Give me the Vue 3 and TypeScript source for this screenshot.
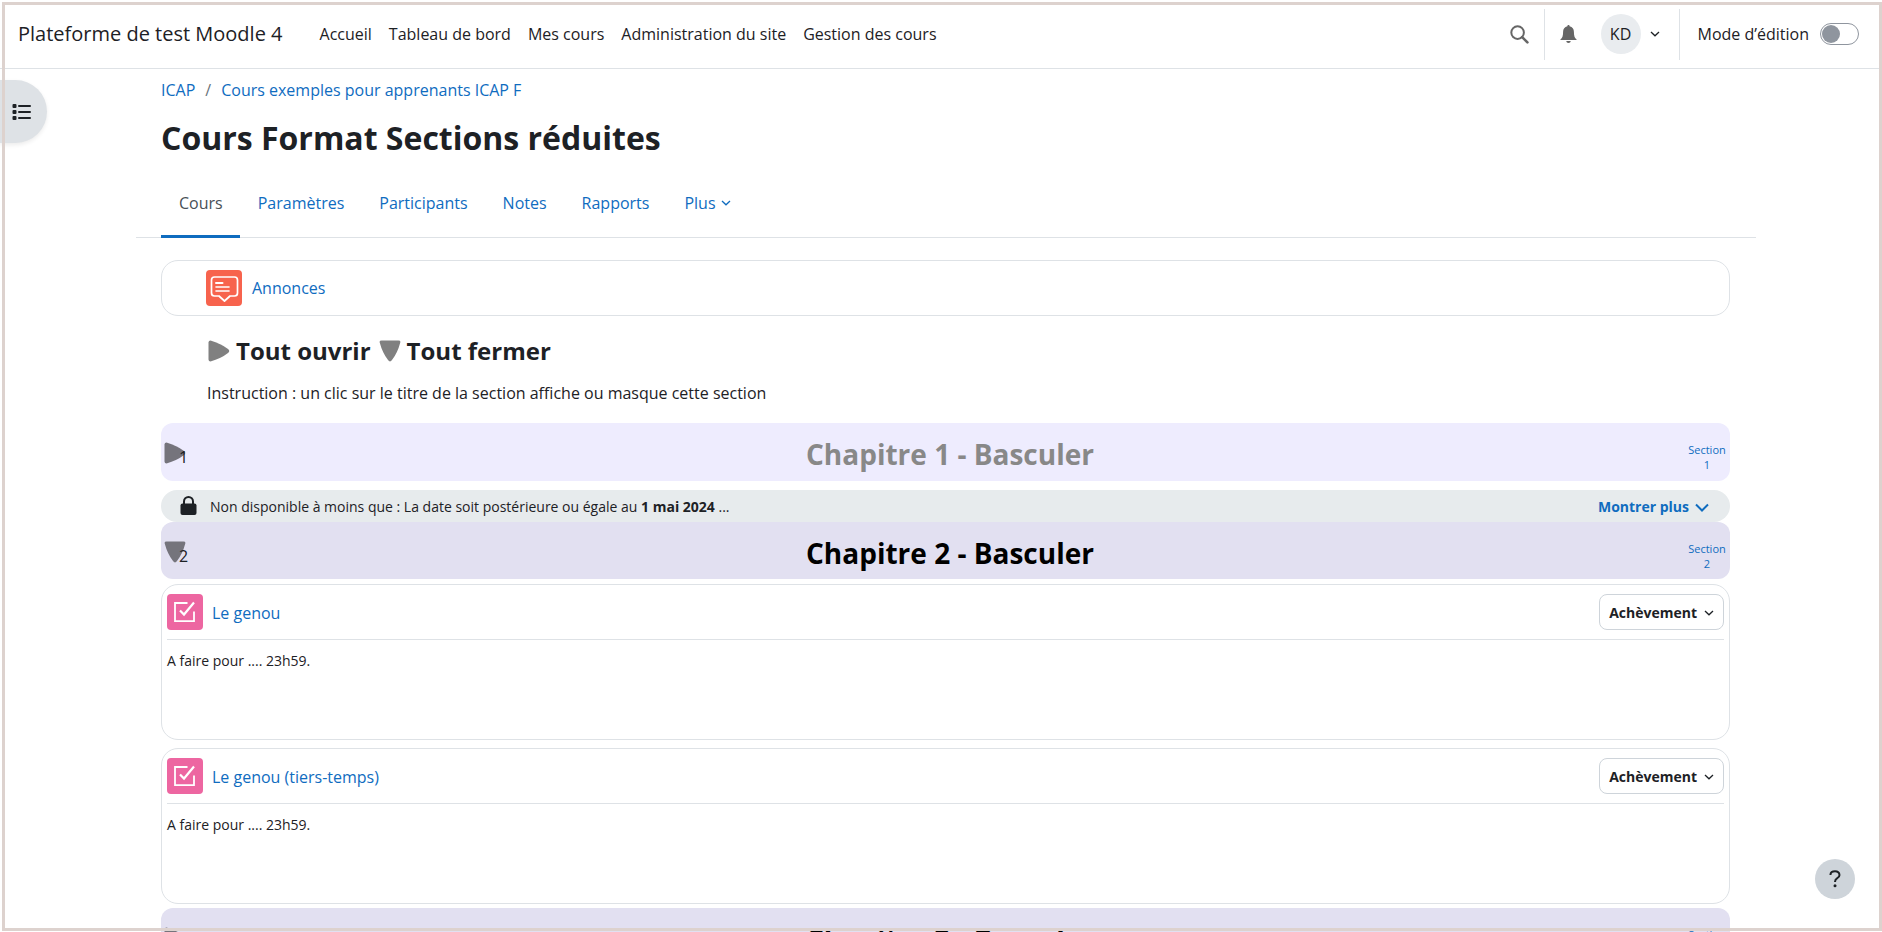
<script setup lang="ts">
import { ref } from 'vue'

interface Activity {
  name: string
  note: string
}
interface Section {
  num: number
  title: string
  open: boolean
  dimmed?: boolean
  restriction?: { text: string; date: string }
  activities: Activity[]
}

const navLinks = ['Accueil', 'Tableau de bord', 'Mes cours', 'Administration du site', 'Gestion des cours']
const tabs = ['Cours', 'Paramètres', 'Participants', 'Notes', 'Rapports']
const activeTab = ref('Cours')
const editing = ref(false)

const arrowRight = 'M.5 2.5Q.5.5 2.5.5 13 3.500 20 9 22.500 11 20 13 13 18.500 2.500 21.500.5 21.500.5 19.500Z'
const arrowDown = 'M2.5.5H19.500Q21.800.5 21.300 2.500 18.500 13 13 20 11 22.800 9 20 3.500 13 .700 2.500.200.5 2.500.5Z'

const sections = ref<Section[]>([
  {
    num: 1,
    title: 'Chapitre 1 - Basculer',
    open: false,
    dimmed: true,
    restriction: {
      text: 'Non disponible à moins que : La date soit postérieure ou égale au',
      date: '1 mai 2024',
    },
    activities: [],
  },
  {
    num: 2,
    title: 'Chapitre 2 - Basculer',
    open: true,
    activities: [
      { name: 'Le genou', note: 'A faire pour .... 23h59.' },
      { name: 'Le genou (tiers-temps)', note: 'A faire pour .... 23h59.' },
    ],
  },
  { num: 3, title: 'Chapitre 3 - Basculer', open: false, activities: [] },
])

function setAll(open: boolean) {
  sections.value.forEach((s) => (s.open = open))
}
</script>

<template>
  <div class="page">
    <header class="topbar">
      <a class="brand" href="#">Plateforme de test Moodle 4</a>
      <nav class="nav" aria-label="Navigation du site">
        <a v-for="l in navLinks" :key="l" href="#">{{ l }}</a>
      </nav>
      <div class="tools">
        <button class="icon-btn search" type="button" aria-label="Rechercher">
          <svg width="19" height="19" viewBox="0 0 19 19">
            <circle cx="7.6" cy="7.6" r="6.3" fill="none" stroke="#666" stroke-width="2" />
            <path d="M12.2 12.2 17.4 17.4" stroke="#666" stroke-width="2.6" stroke-linecap="round" />
          </svg>
        </button>
        <button class="icon-btn bell" type="button" aria-label="Notifications">
          <svg width="17" height="18" viewBox="0 0 17 18" fill="#666">
            <path d="M8.5 0c.7 0 1.1.5 1.1 1.2 2.8.6 4.3 2.7 4.3 5.5 0 4.200.8 6.300 2.600 7.500v.9H.5v-.9c1.800-1.200 2.600-3.300 2.600-7.500C3.100 3.900 4.600 1.800 7.400 1.200 7.400.5 7.800 0 8.500 0Z" />
            <path d="M6.300 16h4.400c0 1.200-1 2-2.200 2s-2.200-.8-2.200-2Z" />
          </svg>
        </button>
        <button class="icon-btn user" type="button" aria-label="Menu utilisateur">
          <span class="avatar">KD</span>
          <svg width="10" height="6" viewBox="0 0 10 6"><path d="M1 1 5 4.800 9 1" fill="none" stroke="#1d2125" stroke-width="1.300" /></svg>
        </button>
        <label class="edit">
          <span>Mode d’édition</span>
          <input v-model="editing" type="checkbox" role="switch" />
        </label>
      </div>
    </header>

    <button class="drawer" type="button" aria-label="Ouvrir l’index du cours">
      <svg width="19" height="16" viewBox="0 0 19 16" fill="#1d2125">
        <rect x="0.500" y="0" width="4" height="4" rx="1" /><rect x="6" y="1" width="13" height="2" rx="1" />
        <rect x="0.500" y="6" width="4" height="4" rx="1" /><rect x="6" y="7" width="13" height="2" rx="1" />
        <rect x="0.500" y="12" width="4" height="4" rx="1" /><rect x="6" y="13" width="13" height="2" rx="1" />
      </svg>
    </button>

    <main class="main">
      <nav class="crumbs" aria-label="Fil d’Ariane">
        <a href="#">ICAP</a><span>/</span><a href="#">Cours exemples pour apprenants ICAP F</a>
      </nav>
      <h1>Cours Format Sections réduites</h1>

      <nav class="tabs" aria-label="Navigation du cours">
        <a v-for="t in tabs" :key="t" href="#" :class="{ active: t === activeTab }" @click.prevent="activeTab = t">{{ t }}</a>
        <a href="#" class="more">Plus
          <svg width="10" height="6" viewBox="0 0 10 6"><path d="M1 1 5 4.800 9 1" fill="none" stroke="#0f6cbf" stroke-width="1.300" /></svg>
        </a>
      </nav>

      <section class="card announce">
        <svg class="mod" viewBox="0 0 36 36" fill="none" stroke="#fff">
          <rect width="36" height="36" rx="4" fill="#f7634d" stroke="none" />
          <path d="M8.500 7h20a3 3 0 0 1 3 3v13a3 3 0 0 1-3 3h-4.500l-5.500 5-5.500-5H8.500a3 3 0 0 1-3-3V10a3 3 0 0 1 3-3Z" stroke-width="1.700" stroke-linejoin="round" />
          <path d="M10 13h6.500" stroke-width="2" stroke-linecap="round" />
          <path d="M10 17h13M10 21h13" stroke-width="1.600" stroke-linecap="round" />
        </svg>
        <a href="#">Annonces</a>
      </section>

      <div class="toggles">
        <button type="button" @click="setAll(true)">
          <svg class="arrow" viewBox="0 0 22 22"><path :d="arrowRight" fill="#808080" /></svg>
          Tout ouvrir
        </button>
        <button type="button" @click="setAll(false)">
          <svg class="arrow" viewBox="0 0 22 22"><path :d="arrowDown" fill="#808080" /></svg>
          Tout fermer
        </button>
      </div>
      <p class="hint">Instruction : un clic sur le titre de la section affiche ou masque cette section</p>

      <section v-for="s in sections" :key="s.num" class="chapter">
        <div class="bar" :class="{ dimmed: s.dimmed }">
          <div class="num">
            <svg class="arrow" viewBox="0 0 22 22"><path :d="s.open ? arrowDown : arrowRight" fill="#75747c" /></svg>
            <span>{{ s.num }}</span>
          </div>
          <h2><button type="button" @click="s.open = !s.open">{{ s.title }}</button></h2>
          <a class="jump" href="#">Section {{ s.num }}</a>
        </div>

        <div v-if="s.restriction" class="restriction">
          <svg width="17" height="19" viewBox="0 0 17 19">
            <path d="M4 9V5.500a4.500 4.500 0 0 1 9 0V9" fill="none" stroke="#1d2125" stroke-width="2" />
            <rect x="0.500" y="7.500" width="16" height="11.500" rx="2" fill="#1d2125" />
          </svg>
          <span class="why">{{ s.restriction.text }} <strong>{{ s.restriction.date }}</strong> ...</span>
          <button type="button">Montrer plus
            <svg width="14" height="9" viewBox="0 0 14 9"><path d="M1 1.500 7 7.500 13 1.500" fill="none" stroke="#0f6cbf" stroke-width="2" /></svg>
          </button>
        </div>

        <ul v-if="s.open && s.activities.length" class="activities">
          <li v-for="a in s.activities" :key="a.name" class="card activity">
            <div class="head">
              <svg class="mod" viewBox="0 0 36 36" fill="none" stroke="#fff" stroke-width="1.800">
                <rect width="36" height="36" rx="4" fill="#ed66a1" stroke="none" />
                <path d="M20.500 9H8v18.200h19V17.500" />
                <path d="M13 16.500l4 4L27 8.500" stroke-width="2.200" />
              </svg>
              <a href="#">{{ a.name }}</a>
              <button type="button">Achèvement
                <svg width="10" height="6" viewBox="0 0 10 6"><path d="M1 1 5 4.800 9 1" fill="none" stroke="#1d2125" stroke-width="1.300" /></svg>
              </button>
            </div>
            <p>{{ a.note }}</p>
          </li>
        </ul>
      </section>
    </main>

    <button class="help" type="button" aria-label="Aide">
      <svg width="12" height="18" viewBox="0 0 12 18">
        <path d="M1.500 5V4.300Q1.800 1.300 6 1.300T10.500 5Q10.500 7 8.300 8.200 6 9.400 6 12" fill="none" stroke="#1d2125" stroke-width="2" />
        <circle cx="6" cy="15.800" r="1.500" fill="#1d2125" />
      </svg>
    </button>
    <div class="frame" aria-hidden="true"></div>
  </div>
</template>

<style>
body {
  margin: 0;
  background: #fff;
}
</style>

<style scoped>
.page {
  position: relative;
  height: 100vh;
  overflow: hidden;
  font: 16px/24px "Open Sans", "Noto Sans", sans-serif;
  color: #1d2125;
}
.page * {
  box-sizing: border-box;
}
a {
  color: #0f6cbf;
  text-decoration: none;
}
button {
  font: inherit;
  color: inherit;
  background: none;
  border: 0;
  padding: 0;
  cursor: pointer;
}
svg {
  display: block;
  flex: none;
}
.frame {
  position: absolute;
  inset: 2px 0 1px 2px;
  border: 3px solid #ddd2ce;
  pointer-events: none;
}

.topbar {
  display: flex;
  align-items: center;
  height: 69px;
  padding: 0 23px 0 18px;
  border-bottom: 1px solid #dee2e6;
}
.topbar a {
  color: #1d2125;
}
.brand {
  font-size: 20px;
  margin-right: 37px;
}
.nav {
  display: flex;
  gap: 17px;
}
.tools {
  display: flex;
  align-items: center;
  height: 51px;
  margin-left: auto;
}
.icon-btn {
  display: flex;
  align-items: center;
  height: 100%;
}
.search {
  padding-right: 15px;
  border-right: 1px solid #dee2e6;
}
.bell {
  padding: 0 24px 0 15px;
}
.user {
  gap: 9px;
  padding-right: 19px;
  border-right: 1px solid #dee2e6;
}
.avatar {
  width: 40px;
  height: 40px;
  line-height: 40px;
  border-radius: 50%;
  background: #e9ecef;
  text-align: center;
}
.edit {
  display: flex;
  align-items: center;
  gap: 11px;
  padding-left: 18px;
}
.edit input {
  appearance: none;
  display: flex;
  align-items: center;
  width: 39px;
  height: 22px;
  margin: 0;
  padding: 0 1px;
  border: 1px solid #8f959e;
  border-radius: 11px;
  background: #fff;
}
.edit input::before {
  content: "";
  width: 18px;
  height: 18px;
  border-radius: 50%;
  background: #8f959e;
}
.edit input:checked::before {
  margin-left: auto;
}

.drawer {
  position: absolute;
  left: 0;
  top: 80px;
  width: 47px;
  height: 63px;
  padding-left: 12px;
  border-radius: 0 32px 32px 0;
  background: #dee2e6;
  box-shadow: 0 2px 4px rgba(0, 0, 0, 0.08);
}
.help {
  position: absolute;
  right: 27px;
  bottom: 33px;
  display: flex;
  align-items: center;
  justify-content: center;
  width: 40px;
  height: 40px;
  border-radius: 50%;
  background: #ced4da;
}

.main {
  padding: 9px 152px 0 161px;
}
.crumbs {
  display: flex;
  gap: 10px;
}
.crumbs span {
  color: #6a737b;
}
h1 {
  margin: 16px 0 0;
  font-size: 32px;
  line-height: 40px;
}
.tabs {
  display: flex;
  height: 68px;
  margin: 12px -26px 22px -25px;
  padding: 0 25px;
  border-bottom: 1px solid #dee2e6;
}
.tabs a {
  display: flex;
  align-items: center;
  gap: 5px;
  height: 68px;
  padding: 0 17px 0 18px;
  border-bottom: 3px solid transparent;
}
.tabs .active {
  color: #495057;
  border-color: #0f6cbf;
}

.card {
  border: 1px solid #dee2e6;
  border-radius: 17px;
}
.mod {
  width: 36px;
  height: 36px;
}
.announce {
  display: flex;
  align-items: center;
  gap: 10px;
  height: 56px;
  padding: 0 44px;
}
.toggles {
  display: flex;
  gap: 8px;
  margin: 19px 0 0 47px;
}
.toggles button {
  display: flex;
  align-items: center;
  gap: 6px;
  font-size: 24px;
  line-height: 32px;
  font-weight: 700;
}
.arrow {
  width: 22px;
  height: 22px;
}
.hint {
  margin: 14px 0 18px 46px;
}

.bar {
  display: grid;
  grid-template-columns: 55px 1fr 46px;
  align-items: center;
  height: 57px;
  border-radius: 12px;
  background: #e2e0f1;
}
.bar.dimmed {
  height: 58px;
  background: #eeecfe;
}
.num {
  position: relative;
  padding: 10px 0 0 18px;
}
.num .arrow {
  position: absolute;
  left: 3px;
  top: 7px;
}
.num span {
  position: relative;
}
h2 {
  margin: 0;
  padding-top: 4px;
  text-align: center;
  font-size: 28px;
  line-height: 36px;
  color: #000;
}
.dimmed h2 {
  color: #888;
}
.jump {
  padding: 10px 3px 0;
  font-size: 11px;
  line-height: 15px;
  text-align: center;
}
.restriction {
  display: flex;
  align-items: center;
  height: 32px;
  margin-top: 9px;
  padding: 2px 21px 0 19px;
  border-radius: 17px;
  background: #e7ebed;
  font-size: 14px;
}
.restriction > svg {
  margin-bottom: 3px;
}
.why {
  margin-left: 13px;
}
.restriction button {
  display: flex;
  align-items: center;
  gap: 6px;
  margin-left: auto;
  font-weight: 700;
  color: #0f6cbf;
}
.activities {
  display: grid;
  gap: 8px;
  margin: 5px 0 4px;
  padding: 0;
  list-style: none;
}
.activity {
  height: 156px;
  padding: 0 5px;
}
.head {
  display: flex;
  align-items: center;
  gap: 9px;
  height: 55px;
  border-bottom: 1px solid #dee2e6;
}
.head a {
  padding-top: 1px;
}
.head button {
  display: flex;
  align-items: center;
  gap: 7px;
  height: 36px;
  margin-left: auto;
  padding: 1px 9px 0;
  border: 1px solid #ced4da;
  border-radius: 8px;
  font-size: 14px;
  font-weight: 700;
}
.activity p {
  margin: 9px 0 0;
  font-size: 14px;
}
</style>
